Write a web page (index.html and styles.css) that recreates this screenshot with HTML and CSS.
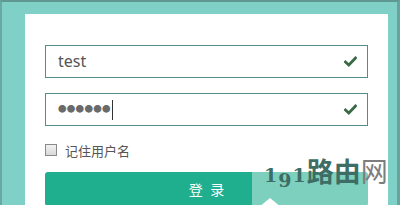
FILE: index.html
```html
<!DOCTYPE html>
<html lang="zh">
<head>
<meta charset="utf-8">
<link rel="stylesheet" href="styles.css">
</head>
<body>
<div class="frame">
  <div class="panel">
    <div class="field">
      <span class="value">test</span>
      <svg class="check" width="13" height="11" viewBox="0 0 13 11"><path d="M1.5 6 L4.8 9 L11.5 2" fill="none" stroke="#3b6a48" stroke-width="2.8" stroke-linecap="square"/></svg>
    </div>
    <div class="field">
      <span class="dots">●●●●●●</span><span class="caret"></span>
      <svg class="check" width="13" height="11" viewBox="0 0 13 11"><path d="M1.5 6 L4.8 9 L11.5 2" fill="none" stroke="#3b6a48" stroke-width="2.8" stroke-linecap="square"/></svg>
    </div>
    <label class="remember"><span class="box"></span><span>记住用户名</span></label>
    <div class="btn">登 录</div>
  </div>
  <div class="mark">
    <div class="mark-bg"></div>
    <div class="tri"></div>
    <div class="mark-text"><span class="num">1</span><span class="num low">9</span><span class="num">1</span><span class="cn">路由</span><span class="cn grey">网</span></div>
  </div>
</div>
</body>
</html>
```
FILE: styles.css
```css
html, body {
  margin: 0;
  padding: 0;
  width: 400px;
  height: 205px;
  overflow: hidden;
  background: #7fd0c7;
}
.frame {
  position: relative;
  box-sizing: border-box;
  width: 400px;
  height: 205px;
  overflow: hidden;
  border-top: 2px solid #5f9893;
  border-left: 2px solid #6aa8a2;
  border-right: 3px solid #6aa39e;
  padding: 12px 9px 0 23px;
  font-family: "Noto Sans", "Noto Sans CJK SC", sans-serif;
}
.panel {
  background: #fff;
  height: 200px;
  padding: 31px 20px 0 20px;
  display: flex;
  flex-direction: column;
}
.field {
  box-sizing: border-box;
  height: 33px;
  flex: none;
  border: 1px solid #4f8f86;
  display: flex;
  align-items: center;
  padding: 0 10px 0 12px;
  margin-bottom: 15px;
}
.value {
  font-size: 16px;
  color: #555;
  flex: 1;
  line-height: 1;
  margin-top: -2px;
}
.dots {
  font-size: 8.5px;
  letter-spacing: 0.3px;
  color: #6a6a6a;
  line-height: 1;
}
.caret {
  width: 1px;
  height: 20px;
  background: #333;
  margin-left: 1px;
  flex: none;
}
.field .caret + .check { margin-left: auto; }
.check { flex: none; }
.remember {
  display: flex;
  align-items: center;
  gap: 8px;
  font-size: 13px;
  color: #555;
  height: 18px;
  flex: none;
}
.box {
  width: 10px;
  height: 10px;
  border: 1px solid #8a8a8a;
  background: linear-gradient(#f2f2f2, #d8d8d8);
}
.btn {
  margin-top: 13px;
  height: 34px;
  flex: none;
  background: #1fae8e;
  border-radius: 3px;
  color: #fff;
  font-size: 14px;
  letter-spacing: 2px;
  display: flex;
  align-items: center;
  justify-content: center;
  padding-left: 2px;
}
.mark {
  position: absolute;
  left: 248px;
  top: 166px;
  width: 150px;
  height: 39px;
}
.mark-bg {
  position: absolute;
  left: 2px;
  top: 2px;
  width: 117px;
  height: 37px;
  background: rgba(255, 255, 255, 0.42);
}
.tri {
  position: absolute;
  left: 9px;
  top: 30px;
  width: 0;
  height: 0;
  border-left: 11px solid transparent;
  border-right: 11px solid transparent;
  border-bottom: 9px solid #fff;
}
.mark-text {
  position: absolute;
  left: 14px;
  top: -11px;
  white-space: nowrap;
  color: #3d6d65;
  line-height: 1;
}
.num {
  font-family: "DejaVu Serif", serif;
  font-size: 19px;
  font-weight: bold;
  margin-right: 1px;
}
.low {
  vertical-align: -5px;
}
.cn {
  font-family: "Noto Sans CJK SC", sans-serif;
  font-size: 27px;
  font-weight: bold;
}
.grey { color: #7d7d7d; font-weight: normal; }
```
